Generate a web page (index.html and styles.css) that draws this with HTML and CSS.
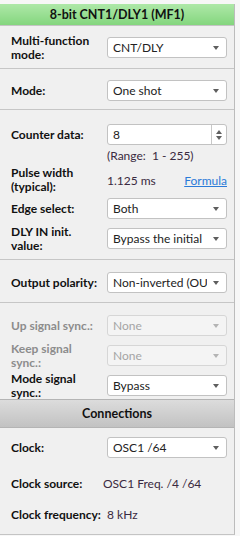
FILE: index.html
```html
<!DOCTYPE html>
<html lang="en">
<head>
  <meta charset="UTF-8">
  <meta name="viewport" content="width=device-width, initial-scale=1.0">
  <title>8-bit CNT1/DLY1 (MF1)</title>
  <link rel="stylesheet" href="styles.css">
</head>
<body>
  <div class="panel">
    <div class="title">8-bit CNT1/DLY1 (MF1)</div>

    <div class="group g1">
      <div class="row">
        <span class="label">Multi-function<br>mode:</span>
        <div class="select"><span class="text">CNT/DLY</span><i class="arrow"></i></div>
      </div>
    </div>

    <div class="group g2">
      <div class="row">
        <span class="label">Mode:</span>
        <div class="select"><span class="text">One shot</span><i class="arrow"></i></div>
      </div>
    </div>

    <div class="group g3">
      <div class="row">
        <span class="label">Counter data:</span>
        <div class="select spin">
          <span class="text">8</span>
          <span class="spinner"><i class="up"></i><i class="down"></i></span>
        </div>
      </div>
      <div class="row note">
        <span class="label"></span>
        <span class="value">(Range:&nbsp; 1 - 255)</span>
      </div>
      <div class="row pulse">
        <span class="label">Pulse width<br>(typical):</span>
        <span class="value">1.125 ms</span>
        <a class="link" href="#">Formula</a>
      </div>
      <div class="row edge">
        <span class="label">Edge select:</span>
        <div class="select"><span class="text">Both</span><i class="arrow"></i></div>
      </div>
      <div class="row dly">
        <span class="label">DLY IN init.<br>value:</span>
        <div class="select"><span class="text">Bypass the initial</span><i class="arrow"></i></div>
      </div>
    </div>

    <div class="group g4">
      <div class="row">
        <span class="label">Output polarity:</span>
        <div class="select"><span class="text">Non-inverted (OUT)</span><i class="arrow"></i></div>
      </div>
    </div>

    <div class="group g5">
      <div class="row off">
        <span class="label">Up signal sync.:</span>
        <div class="select"><span class="text">None</span><i class="arrow"></i></div>
      </div>
      <div class="row off">
        <span class="label">Keep signal<br>sync.:</span>
        <div class="select"><span class="text">None</span><i class="arrow"></i></div>
      </div>
      <div class="row">
        <span class="label">Mode signal<br>sync.:</span>
        <div class="select"><span class="text">Bypass</span><i class="arrow"></i></div>
      </div>
    </div>

    <div class="subtitle">Connections</div>

    <div class="group g6">
      <div class="row">
        <span class="label">Clock:</span>
        <div class="select"><span class="text">OSC1 /64</span><i class="arrow"></i></div>
      </div>
      <div class="row source">
        <span class="label">Clock source:</span>
        <span class="value">OSC1 Freq. /4 /64</span>
      </div>
      <div class="row freq">
        <span class="label">Clock frequency:</span>
        <span class="value">8 kHz</span>
      </div>
    </div>
  </div>
</body>
</html>
```

FILE: styles.css
```css
body {
  margin: 0;
  padding-top: 4px;
  background-color: #f7f7f7;
  font-family: Lato, "Noto Sans", sans-serif;
  font-size: 12px;
  color: #111;
}
.panel {
  width: 234px;
  background-color: #f0f0f0;
  border-right: 1px solid #bcbcbc;
  border-bottom: 1px solid #c4c4c4;
}
.title {
  height: 21px;
  line-height: 21px;
  text-align: center;
  font-weight: bold;
  font-size: 12.5px;
  background: linear-gradient(#aee8a8, #84d67e);
  border-bottom: 1px solid #c4c4c4;
}
.group {
  display: flex;
  flex-direction: column;
  border-bottom: 1px solid #c6c6c6;
}
.g1 { padding: 11px 0 10px; }
.g2 { padding: 11px 0 8px; }
.g3 { padding: 14px 0 10px; }
.g4 { padding: 12px 0 9px; }
.g5 { padding: 12px 0 3px; gap: 9px; border-bottom: none; }
.g6 { padding: 9px 0 9px; border-bottom: none; }

.row {
  display: flex;
  align-items: center;
  height: 21px;
  padding: 0 7px 0 11px;
}
.label {
  flex: 0 0 96px;
  font-weight: bold;
  line-height: 14px;
}
.value {
  color: #3a2a40;
}
.note { height: 21px; }
.pulse { height: 28px; }
.edge { margin-top: 4px; }
.dly { margin-top: 9px; }
.source { margin-top: 15px; }
.source .value { margin-left: -4px; }
.freq { margin-top: 10px; }

.link {
  margin-left: auto;
  color: #2b7bd8;
  text-decoration: underline;
}

.select {
  box-sizing: border-box;
  display: flex;
  align-items: center;
  width: 120px;
  height: 21px;
  padding-left: 5px;
  background-color: #fff;
  border: 1px solid #c2c2c2;
  border-radius: 3px;
  color: #222;
}
.select .text {
  flex: 1;
  overflow: hidden;
  white-space: nowrap;
}
.arrow {
  flex: 0 0 auto;
  margin: 1px 7px 0 6px;
  border-left: 3.5px solid transparent;
  border-right: 3.5px solid transparent;
  border-top: 4px solid #5e5e5e;
}
.spinner {
  display: flex;
  flex-direction: column;
  align-items: center;
  justify-content: center;
  gap: 2px;
  width: 14px;
  height: 100%;
  border-left: 1px solid #c8c8c8;
}
.spinner .up {
  border-left: 3px solid transparent;
  border-right: 3px solid transparent;
  border-bottom: 4px solid #606060;
}
.spinner .down {
  border-left: 3px solid transparent;
  border-right: 3px solid transparent;
  border-top: 4px solid #606060;
}

.off .label {
  color: #8c8c8c;
}
.off .select {
  background-color: #f4f4f4;
  border-color: #d6d6d6;
  color: #a4a4a4;
}
.off .arrow {
  border-top-color: #b4b4b4;
}

.subtitle {
  height: 27px;
  line-height: 27px;
  text-align: center;
  font-weight: bold;
  font-size: 12.5px;
  background: linear-gradient(#dcdcdc, #c2c2c2);
  border-top: 1px solid #b4b4b4;
  border-bottom: 1px solid #b4b4b4;
}
```
